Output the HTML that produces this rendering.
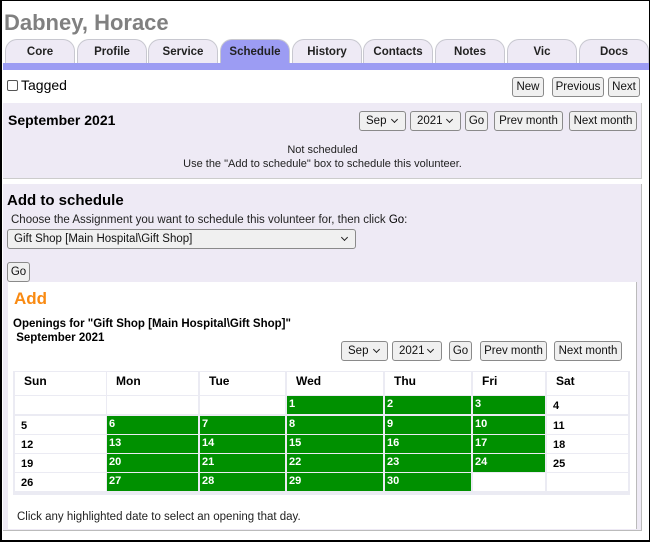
<!DOCTYPE html>
<html><head><meta charset="utf-8"><style>
*{box-sizing:border-box;margin:0;padding:0}
body{width:650px;height:542px;overflow:hidden;background:#fff;font-family:"Liberation Sans",Arial,sans-serif;font-size:11.5px;color:#000;position:relative}
.frame{position:absolute;left:0;top:0;width:650px;height:542px;border:1px solid #000;border-left-width:2px;border-bottom-width:2px}
.a{position:absolute}
.tab{position:absolute;top:39px;height:25px;width:70px;background:#eeeaf5;border:1px solid #c8c8d0;border-bottom:none;border-radius:12px 12px 0 0;font-weight:bold;font-size:11.5px;text-align:center;line-height:24px;color:#222}
.tab.on{background:#9c9cf3}
.btn{position:absolute;height:20px;border:1px solid #8a8a8a;border-radius:3px;background:#f0f0f0;font-size:11.5px;line-height:18px;text-align:center;color:#111}
.sel{position:absolute;height:20px;border:1px solid #8a8a8a;border-radius:3px;background:#f0f0f0;font-size:11.5px;line-height:18px;padding-left:6px;color:#111}
.sel:after{content:"";position:absolute;right:8px;top:5px;width:4px;height:4px;border-right:1.5px solid #222;border-bottom:1.5px solid #222;transform:rotate(45deg)}
.c{position:absolute;font-weight:bold;font-size:11px;line-height:16px;padding-left:2px}
.h{position:absolute;font-weight:bold;font-size:12px;top:374px}
</style></head><body>
<div class="frame"></div>
<div class="a" style="left:4px;top:10px;font-size:22px;font-weight:bold;color:#808080">Dabney, Horace</div>
<div class="tab" style="left:5px">Core</div>
<div class="tab" style="left:77px">Profile</div>
<div class="tab" style="left:148px">Service</div>
<div class="tab on" style="left:220px">Schedule</div>
<div class="tab" style="left:292px">History</div>
<div class="tab" style="left:363px">Contacts</div>
<div class="tab" style="left:435px">Notes</div>
<div class="tab" style="left:507px">Vic</div>
<div class="tab" style="left:579px">Docs</div>
<div class="a" style="left:3px;top:63px;width:646px;height:7px;background:#9c9cf3"></div>
<div class="a" style="left:7px;top:80px;width:11px;height:11px;border:1px solid #555;border-radius:2px"></div>
<div class="a" style="left:21px;top:77px;font-size:14px">Tagged</div>
<div class="btn" style="left:512px;top:77px;width:32px">New</div>
<div class="btn" style="left:552px;top:77px;width:52px">Previous</div>
<div class="btn" style="left:608px;top:77px;width:32px">Next</div>

<div class="a" style="left:3px;top:103px;width:639px;height:76px;background:#eeeaf5;border-right:1px solid #ccc;border-bottom:1px solid #ccc"></div>
<div class="a" style="left:8px;top:112px;font-size:14px;font-weight:bold">September 2021</div>
<div class="sel" style="left:359px;top:111px;width:47px">Sep</div>
<div class="sel" style="left:410px;top:111px;width:51px">2021</div>
<div class="btn" style="left:465px;top:111px;width:23px">Go</div>
<div class="btn" style="left:494px;top:111px;width:69px">Prev month</div>
<div class="btn" style="left:569px;top:111px;width:68px">Next month</div>
<div class="a" style="left:3px;top:143px;width:639px;text-align:center;line-height:14px;color:#222;font-size:11px">Not scheduled<br>Use the "Add to schedule" box to schedule this volunteer.</div>

<div class="a" style="left:3px;top:184px;width:639px;height:347px;background:#eeeaf5;border-right:1px solid #bbb;border-bottom:1px solid #bbb"></div>
<div class="a" style="left:7px;top:192px;font-size:15px;font-weight:bold">Add to schedule</div>
<div class="a" style="left:11px;top:214px;color:#222">Choose the Assignment you want to schedule this volunteer for, then click <b style="font-weight:normal;color:#000">Go</b>:</div>
<div class="sel" style="left:7px;top:229px;width:349px">Gift Shop [Main Hospital\Gift Shop]</div>
<div class="btn" style="left:7px;top:262px;width:23px">Go</div>

<div class="a" style="left:8px;top:282px;width:629px;height:247px;background:#fff;border-right:1px solid #bbb"></div>
<div class="a" style="left:14px;top:289px;font-size:17px;font-weight:bold;color:#f98a12">Add</div>
<div class="a" style="left:13px;top:317px;font-weight:bold;line-height:14px">Openings for "Gift Shop [Main Hospital\Gift Shop]"<br>&nbsp;September 2021</div>
<div class="sel" style="left:341px;top:341px;width:47px">Sep</div>
<div class="sel" style="left:392px;top:341px;width:50px">2021</div>
<div class="btn" style="left:449px;top:341px;width:23px">Go</div>
<div class="btn" style="left:480px;top:341px;width:67px">Prev month</div>
<div class="btn" style="left:554px;top:341px;width:68px">Next month</div>

<div class="a" style="left:13px;top:371px;width:617px;height:124px;border:2px solid #ebebf3;background:#ebebf3"></div>
<div id="cal"></div>
<div class="a" style="left:17px;top:511px;color:#222">Click any highlighted date to select an opening that day.</div>
<script>
var cols=[[15,91],[107,91],[200,85],[287,96],[385,86],[473,72],[547,81]];
var rows=[[372,23],[396,18],[416,18],[435,18],[454,18],[473,18]];
var names=["Sun","Mon","Tue","Wed","Thu","Fri","Sat"],h="";
for(var r=0;r<6;r++)for(var c=0;c<7;c++){
 var x=cols[c][0],w=cols[c][1],y=rows[r][0],hh=rows[r][1];
 if(r==0){h+='<div class="a" style="left:'+x+'px;top:'+y+'px;width:'+w+'px;height:'+hh+'px;background:#fff"></div><div class="h" style="left:'+(x+9)+'px">'+names[c]+'</div>';continue;}
 var idx=(r-1)*7+c-3, txt="", green=false;
 if(idx>=0&&idx<30){txt=idx+1;green=(c>=1&&c<=5);}
 h+='<div class="c" style="left:'+x+'px;top:'+y+'px;width:'+w+'px;height:'+hh+'px;background:'+(green?'#009000':'#fff')+';color:'+(green?'#fff':'#000')+';padding-left:'+(green?2:6)+'px;padding-top:'+(green?0:2)+'px">'+txt+'</div>';
}
document.getElementById('cal').innerHTML=h;
</script>
</body></html>
